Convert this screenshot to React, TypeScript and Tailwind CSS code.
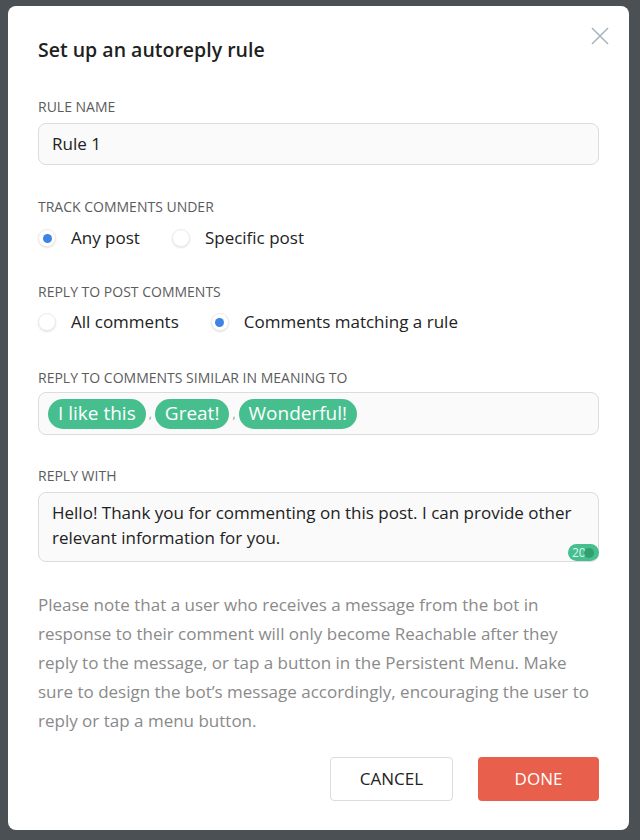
import { useState } from "react";

const tags = ["I like this", "Great!", "Wonderful!"];

function Radio({ checked, label, onClick }: { checked: boolean; label: string; onClick: () => void }) {
    return (
        <button onClick={onClick} className="flex items-center gap-[15px]">
            <span className="flex h-[18px] w-[18px] items-center justify-center rounded-full border border-[#ececec] bg-white shadow-[0_1px_2px_rgba(0,0,0,0.12)]">
                {checked && <span className="h-[9px] w-[9px] rounded-full bg-[#3d84e6]" />}
            </span>
            <span className="text-[17px] text-[#222]">{label}</span>
        </button>
    );
}

export default function App() {
    const [track, setTrack] = useState("any");
    const [reply, setReply] = useState("matching");

    return (
        <div
            className="h-[840px] w-[640px] overflow-hidden bg-[#4a5053] pl-[8px] pt-[6px]"
            style={{ fontFamily: '"Open Sans", "Noto Sans", sans-serif' }}
        >
            <div className="relative h-[824px] w-[621px] rounded-[8px] bg-white px-[30px] pt-[31px]">
                {/* Close */}
                <button className="absolute right-[20px] top-[21px] text-[#a7b6ba]">
                    <svg width="18" height="18" viewBox="0 0 18 18" fill="none" stroke="currentColor" strokeWidth="1.6">
                        <path d="M1 1L17 17" />
                        <path d="M17 1L1 17" />
                    </svg>
                </button>

                <h1 className="text-[19.5px] font-semibold leading-[26px] text-[#1f1f1f]">Set up an autoreply rule</h1>

                {/* Rule name */}
                <p className="mt-[34px] text-[14px] uppercase leading-[20px] text-[#5c5c5c]">Rule name</p>
                <div className="mt-[6px] flex h-[42px] items-center rounded-[8px] border border-[#dcdcdc] bg-[#fafafa] px-[13px] text-[17px] text-[#222]">
                    Rule 1
                </div>

                {/* Track */}
                <p className="mt-[32px] text-[14px] uppercase leading-[20px] text-[#5c5c5c]">Track comments under</p>
                <div className="mt-[9px] flex h-[24px] items-center gap-[32px]">
                    <Radio checked={track === "any"} label="Any post" onClick={() => setTrack("any")} />
                    <Radio checked={track === "specific"} label="Specific post" onClick={() => setTrack("specific")} />
                </div>

                {/* Reply to */}
                <p className="mt-[32px] text-[14px] uppercase leading-[20px] text-[#5c5c5c]">Reply to post comments</p>
                <div className="mt-[8px] flex h-[24px] items-center gap-[32px]">
                    <Radio checked={reply === "all"} label="All comments" onClick={() => setReply("all")} />
                    <Radio checked={reply === "matching"} label="Comments matching a rule" onClick={() => setReply("matching")} />
                </div>

                {/* Similar */}
                <p className="mt-[34px] text-[14px] uppercase leading-[20px] text-[#5c5c5c]">Reply to comments similar in meaning to</p>
                <div className="mt-[4px] flex h-[43px] items-center rounded-[8px] border border-[#dcdcdc] bg-[#fafafa] px-[9px]">
                    {tags.map((t, i) => (
                        <div key={t} className="flex items-center">
                            {i > 0 && <span className="px-[3px] text-[12px] text-[#999]">,</span>}
                            <span className="flex h-[30px] items-center rounded-full bg-[#46be8e] px-[10px] text-[19px] text-white">{t}</span>
                        </div>
                    ))}
                </div>

                {/* Reply with */}
                <p className="mt-[31px] text-[14px] uppercase leading-[20px] text-[#5c5c5c]">Reply with</p>
                <div className="relative mt-[6px] h-[70px] rounded-[8px] border border-[#dcdcdc] bg-[#fafafa] px-[13px] pt-[7px] text-[17px] leading-[25px] text-[#222]">
                    Hello! Thank you for commenting on this post. I can provide other relevant information for you.
                    <span className="absolute bottom-[0px] right-[-1px] flex h-[17px] w-[31px] items-center rounded-full bg-[#46be8e] pl-[4px] text-[12px] leading-none text-[#dff5ec]">
                        20
                        <span className="absolute right-[5px] h-[10px] w-[10px] rounded-full bg-[#2fa070]" />
                    </span>
                </div>

                {/* Note */}
                <p className="mt-[28px] text-[17px] leading-[29px] text-[#8a8a8a]">
                    Please note that a user who receives a message from the bot in response to their comment will only become Reachable after they reply to the message, or tap a button in the Persistent Menu. Make sure to design the bot’s message accordingly, encouraging the user to reply or tap a menu button.
                </p>

                {/* Buttons */}
                <div className="mt-[22px] flex justify-end gap-[25px]">
                    <button className="h-[44px] w-[123px] rounded-[4px] border border-[#dcdcdc] bg-white text-[17px] text-[#222]">CANCEL</button>
                    <button className="h-[44px] w-[121px] rounded-[4px] bg-[#e8604b] text-[17px] text-white">DONE</button>
                </div>
            </div>
        </div>
    );
}
